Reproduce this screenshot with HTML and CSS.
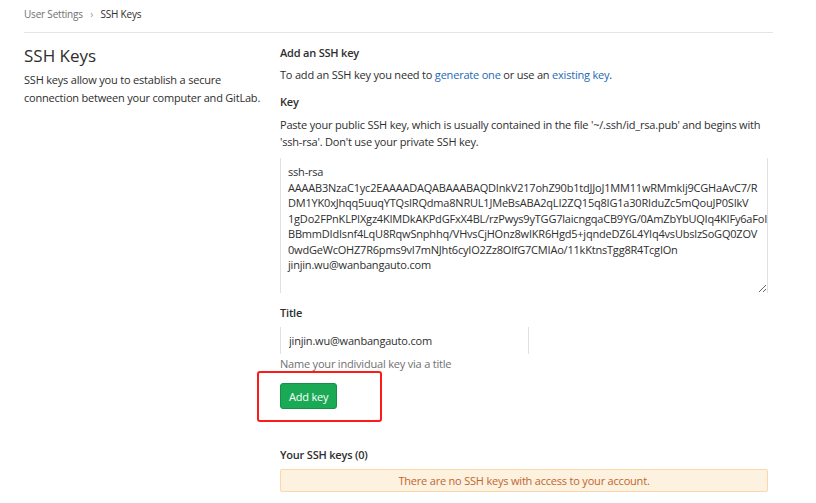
FILE: index.html
```
<!DOCTYPE html>
<html lang="en">
<head>
    <meta charset="UTF-8">
    <title>SSH Keys</title>
    <link rel="stylesheet" href="styles.css">
</head>
<body>
    <div class="breadcrumb">
        <a href="#">User Settings</a>
        <span class="sep">&rsaquo;</span>
        <span class="current">SSH Keys</span>
    </div>

    <div class="row">
        <div class="side">
            <h2>SSH Keys</h2>
            <p>SSH keys allow you to establish a secure connection between your computer and GitLab.</p>
        </div>

        <div class="main">
            <h5>Add an SSH key</h5>
            <p class="intro">To add an SSH key you need to <a href="#">generate one</a> or use an <a href="#">existing key</a>.</p>

            <label class="label">Key</label>
            <p class="hint">Paste your public SSH key, which is usually contained in the file '~/.ssh/id_rsa.pub' and begins with 'ssh-rsa'. Don't use your private SSH key.</p>
            <textarea class="key-box" spellcheck="false">ssh-rsa
AAAAB3NzaC1yc2EAAAADAQABAAABAQDInkV217ohZ90b1tdJJoJ1MM11wRMmkIj9CGHaAvC7/R
DM1YK0xJhqq5uuqYTQsIRQdma8NRUL1JMeBsABA2qLI2ZQ15q8IG1a30RIduZc5mQouJP0SIkV
1gDo2FPnKLPIXgz4KIMDkAKPdGFxX4BL/rzPwys9yTGG7laicngqaCB9YG/0AmZbYbUQIq4KIFy6aFoI
BBmmDIdIsnf4LqU8RqwSnphhq/VHvsCjHOnz8wIKR6Hgd5+jqndeDZ6L4YIq4vsUbslzSoGQ0ZOV
0wdGeWcOHZ7R6pms9vI7mNJht6cyIO2Zz8OlfG7CMIAo/11kKtnsTgg8R4TcgIOn
jinjin.wu@wanbangauto.com</textarea>

            <label class="label title-label">Title</label>
            <input class="title-input" type="text" value="jinjin.wu@wanbangauto.com">
            <p class="help">Name your individual key via a title</p>

            <div class="actions">
                <button class="btn-add">Add key</button>
                <div class="mark"></div>
            </div>

            <h5 class="keys-title">Your SSH keys (0)</h5>
            <div class="empty">There are no SSH keys with access to your account.</div>
        </div>
    </div>
</body>
</html>
```

FILE: styles.css
```
body {
    margin: 0;
    font-family: "Open Sans", "Liberation Sans", sans-serif;
    font-size: 11px;
    letter-spacing: -0.2px;
    color: #2e2e2e;
    background: white;
}

a {
    color: #1b69b6;
    text-decoration: none;
}

.breadcrumb {
    margin: 0 43px 0 24px;
    height: 32px;
    line-height: 28px;
    border-bottom: 1px solid #e5e5e5;
    font-size: 10px;
}

.breadcrumb a {
    color: #707070;
}

.breadcrumb .sep {
    color: #999;
    margin: 0 5px;
}

.row {
    display: flex;
    margin: 0 48px 0 24px;
}

.side {
    width: 256px;
}

.side h2 {
    font-size: 17px;
    font-weight: 400;
    letter-spacing: 0;
    margin: 11px 0 4px;
}

.side p {
    margin: 0;
    max-width: 240px;
    line-height: 18px;
}

.main {
    flex: 1;
}

.main h5 {
    font-size: 11px;
    font-weight: 600;
    margin: 12px 0 0;
    line-height: 16px;
}

.intro {
    margin: 6px 0 0;
    line-height: 16px;
}

.label {
    display: block;
    font-weight: 600;
    margin-top: 11px;
    line-height: 16px;
}

.hint {
    margin: 6px 0 0;
    line-height: 17px;
}

.key-box {
    display: block;
    box-sizing: border-box;
    width: 100%;
    height: 135px;
    margin-top: 8px;
    padding: 6px 7px;
    border: none;
    border-left: 1px solid #e0e0e0;
    border-right: 1px solid #e0e0e0;
    font-family: inherit;
    font-size: 11px;
    letter-spacing: -0.2px;
    line-height: 15.5px;
    color: #2e2e2e;
    white-space: pre;
    overflow: hidden;
}

.title-label {
    margin-top: 12px;
}

.title-input {
    display: block;
    box-sizing: border-box;
    width: 249px;
    height: 27px;
    margin-top: 6px;
    padding: 0 8px;
    border: none;
    border-left: 1px solid #e0e0e0;
    border-right: 1px solid #e0e0e0;
    font-family: inherit;
    font-size: 11px;
    letter-spacing: -0.2px;
    color: #2e2e2e;
}

.help {
    margin: 2px 0 0;
    color: #707070;
    line-height: 16px;
}

.actions {
    position: relative;
    padding-top: 11px;
}

.btn-add {
    display: block;
    background: #1aaa55;
    border: 1px solid #168f48;
    border-radius: 3px;
    color: white;
    font-family: inherit;
    font-size: 11px;
    letter-spacing: -0.2px;
    height: 26px;
    padding: 0 8px;
}

.mark {
    position: absolute;
    left: -23px;
    top: -1px;
    width: 121px;
    height: 47px;
    border: 2px solid #ff1a1a;
    border-radius: 3px;
}

.main .keys-title {
    margin-top: 38px;
}

.empty {
    margin-top: 6px;
    height: 23px;
    line-height: 21px;
    box-sizing: border-box;
    background: #fdf1e0;
    border: 1px solid #fcd8a8;
    border-radius: 2px;
    color: #c2662c;
    text-align: center;
}
```
